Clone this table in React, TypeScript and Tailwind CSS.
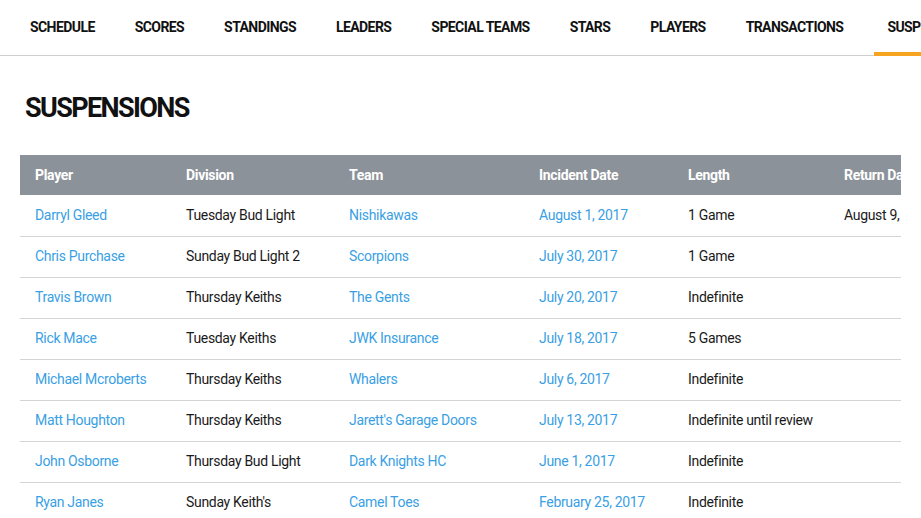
const navItems = [
  'Schedule',
  'Scores',
  'Standings',
  'Leaders',
  'Special Teams',
  'Stars',
  'Players',
  'Transactions',
  'Suspensions',
];

interface Suspension {
  player: string;
  division: string;
  team: string;
  incident: string;
  length: string;
  returnDate: string;
}

const rows: Suspension[] = [
  { player: 'Darryl Gleed', division: 'Tuesday Bud Light', team: 'Nishikawas', incident: 'August 1, 2017', length: '1 Game', returnDate: 'August 9, 2017' },
  { player: 'Chris Purchase', division: 'Sunday Bud Light 2', team: 'Scorpions', incident: 'July 30, 2017', length: '1 Game', returnDate: '' },
  { player: 'Travis Brown', division: 'Thursday Keiths', team: 'The Gents', incident: 'July 20, 2017', length: 'Indefinite', returnDate: '' },
  { player: 'Rick Mace', division: 'Tuesday Keiths', team: 'JWK Insurance', incident: 'July 18, 2017', length: '5 Games', returnDate: '' },
  { player: 'Michael Mcroberts', division: 'Thursday Keiths', team: 'Whalers', incident: 'July 6, 2017', length: 'Indefinite', returnDate: '' },
  { player: 'Matt Houghton', division: 'Thursday Keiths', team: "Jarett's Garage Doors", incident: 'July 13, 2017', length: 'Indefinite until review', returnDate: '' },
  { player: 'John Osborne', division: 'Thursday Bud Light', team: 'Dark Knights HC', incident: 'June 1, 2017', length: 'Indefinite', returnDate: '' },
  { player: 'Ryan Janes', division: "Sunday Keith's", team: 'Camel Toes', incident: 'February 25, 2017', length: 'Indefinite', returnDate: '' },
];

export default function App() {
  return (
    <div className="w-[921px] h-[518px] overflow-hidden bg-white font-['Roboto',sans-serif] tracking-[-0.02em]">
      {/* Top nav */}
      <nav className="flex h-[56px] border-b border-[#cfcfcf] pl-[10px] whitespace-nowrap tracking-[-0.58px]">
        {navItems.map((item) => {
          const active = item === 'Suspensions';
          return (
            <div
              key={item}
              className={`flex items-center text-[14px] font-bold uppercase text-[#111] -mb-px ${
                active ? 'border-b-[4px] border-[#f7a521] ml-[11px] pl-[13px] pr-5 pt-[2px]' : 'px-5 pb-[2px]'
              }`}
            >
              {item}
            </div>
          );
        })}
      </nav>

      <h1 className="pl-[25px] pt-[32px] text-[27px] leading-[40px] font-bold uppercase text-[#111] tracking-[-0.06em]">
        Suspensions
      </h1>

      <div className="mt-[27px] ml-[20px] w-[881px] overflow-hidden">
        <table className="w-[1010px] table-fixed border-collapse text-[14px]">
          <colgroup>
            <col className="w-[151px]" />
            <col className="w-[163px]" />
            <col className="w-[190px]" />
            <col className="w-[149px]" />
            <col className="w-[156px]" />
            <col className="w-[201px]" />
          </colgroup>
          <thead>
            <tr className="bg-[#8c9299] text-white h-[40px]">
              {['Player', 'Division', 'Team', 'Incident Date', 'Length', 'Return Date'].map((h) => (
                <th key={h} className="text-left font-bold pl-[15px] whitespace-nowrap">
                  {h}
                </th>
              ))}
            </tr>
          </thead>
          <tbody>
            {rows.map((r) => (
              <tr key={r.player} className="h-[41px] border-b border-[#d4d4d4] whitespace-nowrap">
                <td className="pl-[15px] text-[#3a9fe4]">{r.player}</td>
                <td className="pl-[15px] text-[#1a1a1a]">{r.division}</td>
                <td className="pl-[15px] text-[#3a9fe4]">{r.team}</td>
                <td className="pl-[15px] text-[#3a9fe4]">{r.incident}</td>
                <td className="pl-[15px] text-[#1a1a1a]">{r.length}</td>
                <td className="pl-[15px] text-[#1a1a1a]">{r.returnDate}</td>
              </tr>
            ))}
          </tbody>
        </table>
      </div>
    </div>
  );
}
